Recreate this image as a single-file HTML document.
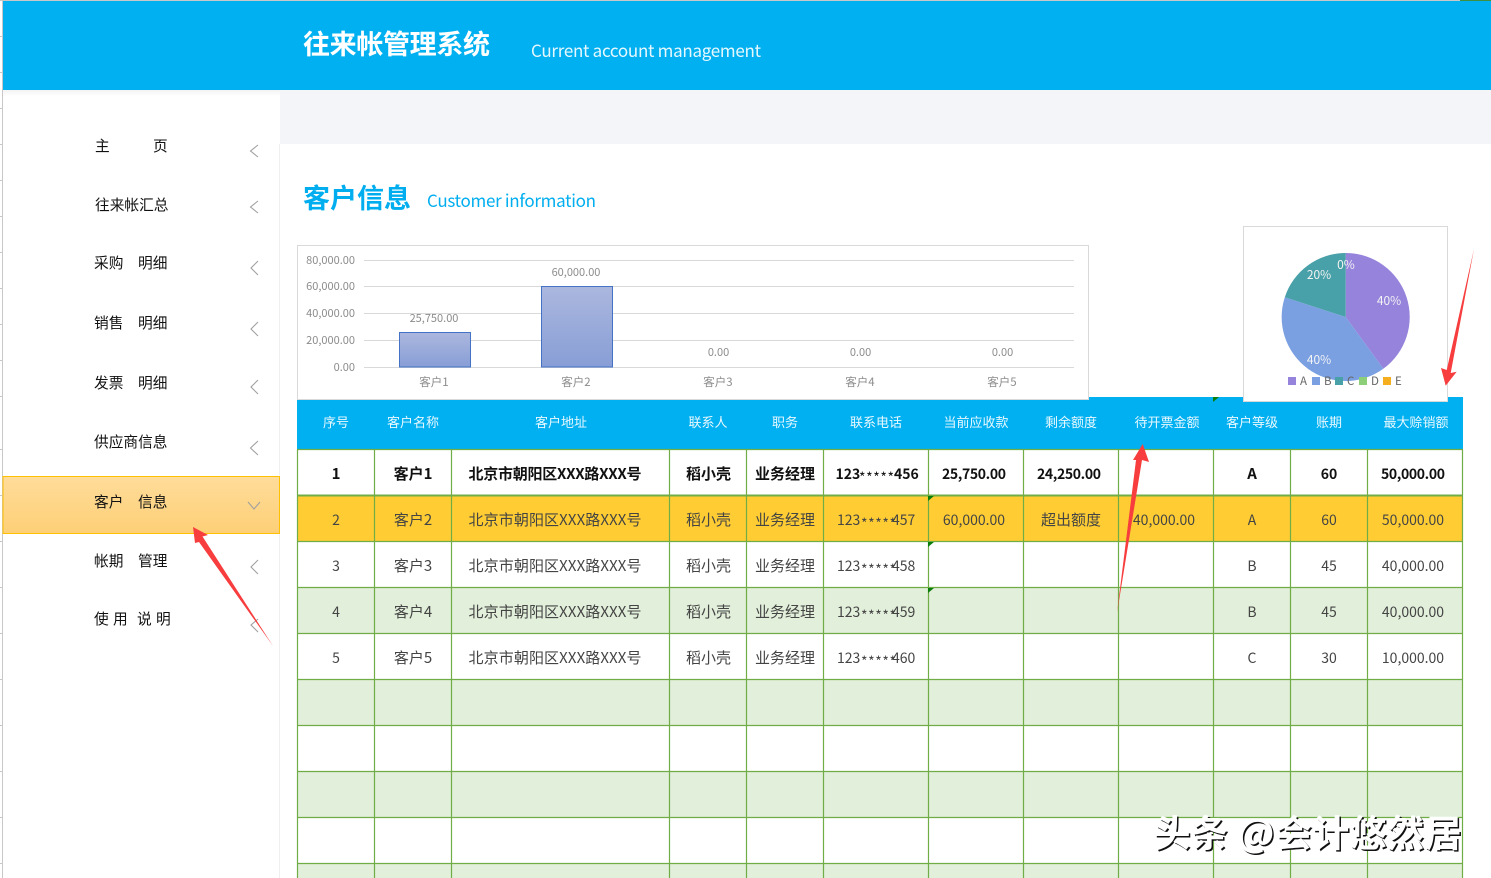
<!DOCTYPE html>
<html lang="zh-CN">
<head>
<meta charset="utf-8">
<title>往来帐管理系统</title>
<style>
html,body{margin:0;padding:0;background:#fff;width:1491px;height:878px;overflow:hidden}
svg{display:block;font-family:"Liberation Sans","Noto Sans CJK SC",sans-serif}
.cjk{font-family:"Noto Sans CJK SC","Liberation Sans",sans-serif}
.menu text{font-size:14.700px;fill:#111}
.ch{fill:none;stroke:#a0a0a0;stroke-width:1.1}
.ax text{font-size:11px;fill:#8c8c8c}
.ax .m{text-anchor:middle}
.ax .r{text-anchor:end}
.ax .c{font-size:11.500px}
.gl{stroke:#d9d9d9;stroke-width:1}
.th text{font-size:13px;fill:#e8f8ff;text-anchor:middle}
.b text{font-size:15px;fill:#111;font-weight:bold;text-anchor:middle}
.n text{font-size:15px;fill:#444;text-anchor:middle}
.b text.s,.n text.s{font-size:14px}
.b text.p,.n text.p{text-anchor:start;font-size:14px}
.p .st{font-size:14px;font-weight:normal;letter-spacing:.6px}
.grid path{stroke:#70ad47;stroke-width:1.2;fill:none}
.tri{fill:#0a7d0a}
.red{fill:#f73d3d}
.wm{font-size:37px;font-weight:bold}
</style>
</head>
<body>
<svg width="1491" height="878" viewBox="0 0 1491 878" xmlns="http://www.w3.org/2000/svg">
<defs>
<linearGradient id="bar" x1="0" y1="0" x2="0" y2="1"><stop offset="0" stop-color="#abb7de"/><stop offset="1" stop-color="#889ed6"/></linearGradient>
<linearGradient id="act" x1="0" y1="0" x2="0" y2="1"><stop offset="0" stop-color="#ffdc9a"/><stop offset="1" stop-color="#fdd077"/></linearGradient>
<linearGradient id="sh" x1="0" y1="0" x2="0" y2="1"><stop offset="0" stop-color="#e6e6e6"/><stop offset="1" stop-color="#ffffff"/></linearGradient>
</defs>

<!-- outer spreadsheet edge -->
<rect x="0" y="0" width="1491" height="1" fill="#c8c8c8"/>
<rect x="2" y="0" width="1" height="878" fill="#c8c8c8"/>
<path d="M0 36.500H2M0 72.500H2M0 108.500H2M0 144.500H2M0 180.500H2M0 216.500H2M0 252.500H2M0 288.500H2M0 324.500H2M0 360.500H2M0 396.500H2M0 449.500H2M0 495.500H2M0 541.500H2M0 587.500H2M0 633.500H2M0 679.500H2M0 725.500H2M0 771.500H2M0 817.500H2M0 863.500H2" stroke="#c8c8c8" stroke-width="1"/>

<!-- header -->
<rect x="3" y="1" width="1488" height="89" fill="#00b0f0"/>
<rect x="1460" y="0" width="31" height="1" fill="#3f8f3f"/>
<text x="303" y="54" class="cjk" font-size="27" font-weight="bold" fill="#fff" textLength="187">往来帐管理系统</text>
<text x="531" y="57" class="cjk" font-size="17" fill="#e6f8ff" textLength="230">Current account management</text>

<!-- sidebar and band -->
<rect x="280" y="90" width="1211" height="54" fill="#f3f5f9"/>
<rect x="3" y="90" width="277" height="6" fill="url(#sh)" opacity=".5"/>
<rect x="279" y="144" width="1" height="734" fill="#efefef"/>
<rect x="3" y="476.500" width="276.500" height="57" fill="url(#act)" stroke="#ffc000" stroke-width="1"/>

<g class="menu cjk">
<text x="95" y="151">主</text><text x="153" y="151">页</text>
<text x="95" y="210">往来帐汇总</text>
<text x="94" y="268">采购</text><text x="138" y="268">明细</text>
<text x="94" y="328">销售</text><text x="138" y="328">明细</text>
<text x="94" y="388">发票</text><text x="138" y="388">明细</text>
<text x="94" y="447">供应商信息</text>
<text x="94" y="507">客户</text><text x="138" y="507">信息</text>
<text x="94" y="566">帐期</text><text x="138" y="566">管理</text>
<text x="94" y="624">使</text><text x="113" y="624">用</text><text x="137" y="624">说</text><text x="156" y="624">明</text>
</g>
<g class="ch">
<path d="M258 145L250.500 151L258 157"/>
<path d="M258 201L250.500 207L258 213"/>
<path d="M258 261L251 268L258 275"/>
<path d="M258 322L251 329L258 336"/>
<path d="M258 380L251 387L258 394"/>
<path d="M258 441L250.500 448L258 455"/>
<path d="M248 502L254 509L260 502"/>
<path d="M258 560L251 567L258 574"/>
<path d="M258 619L251 625L258 632"/>
</g>

<!-- section title -->
<text x="303" y="208" class="cjk" font-size="27" font-weight="bold" fill="#00aeef" textLength="108">客户信息</text>
<text x="427" y="207" class="cjk" font-size="17" fill="#00aeef" textLength="169">Customer information</text>

<!-- table fills -->
<rect x="297" y="400" width="792" height="50" fill="#00b0f0"/>
<rect x="1089" y="397" width="374" height="53" fill="#00b0f0"/>
<rect x="297" y="495" width="1166" height="46" fill="#ffcd33"/>
<rect x="297" y="587" width="1166" height="46" fill="#e2efda"/>
<rect x="297" y="679" width="1166" height="46" fill="#e2efda"/>
<rect x="297" y="771" width="1166" height="46" fill="#e2efda"/>
<rect x="297" y="863" width="1166" height="15" fill="#e2efda"/>

<!-- grid -->
<g class="grid">
<path d="M297 449.500H1463M297 541.500H1463M297 587.500H1463M297 633.500H1463M297 679.500H1463M297 725.500H1463M297 771.500H1463M297 817.500H1463M297 863.500H1463"/>
<path d="M297 495.500H1463" style="stroke-width:2"/>
<path d="M297.500 450V878M374.500 450V878M451.500 450V878M669.500 450V878M746.500 450V878M823.500 450V878M928.500 450V878M1023.500 450V878M1118.500 450V878M1213.500 450V878M1290.500 450V878M1367.500 450V878M1462.500 450V878"/>
</g>

<!-- header labels -->
<g class="th cjk">
<text x="336" y="427">序号</text>
<text x="413" y="427">客户名称</text>
<text x="561" y="427">客户地址</text>
<text x="708" y="427">联系人</text>
<text x="785" y="427">职务</text>
<text x="876" y="427">联系电话</text>
<text x="976" y="427">当前应收款</text>
<text x="1071" y="427">剩余额度</text>
<text x="1167" y="427">待开票金额</text>
<text x="1252" y="427">客户等级</text>
<text x="1329" y="427">账期</text>
<text x="1416" y="427">最大赊销额</text>
</g>

<!-- row 1 -->
<g class="b cjk">
<text x="336" y="479">1</text>
<text x="413" y="479">客户1</text>
<text x="555" y="479" textLength="173">北京市朝阳区XXX路XXX号</text>
<text x="708.500" y="479">稻小壳</text>
<text x="785" y="479">业务经理</text>
<text class="p" y="479"><tspan x="835.500">123</tspan><tspan class="st" x="859" dy="3.500">*****</tspan><tspan x="894" dy="-3.500">456</tspan></text>
<text class="s" x="974" y="479" textLength="64">25,750.00</text>
<text class="s" x="1069" y="479" textLength="64">24,250.00</text>
<text x="1252" y="479">A</text>
<text class="s" x="1329" y="479">60</text>
<text class="s" x="1413" y="479" textLength="64">50,000.00</text>
</g>

<!-- rows 2-5 -->
<g class="n cjk">
<text class="s" x="336" y="525">2</text><text x="413" y="525">客户2</text><text x="555" y="525" textLength="173">北京市朝阳区XXX路XXX号</text><text x="708.500" y="525">稻小壳</text><text x="785" y="525">业务经理</text><text class="p" y="525"><tspan x="837">123</tspan><tspan class="st" x="861" dy="3.500">*****</tspan><tspan x="892" dy="-3.500">457</tspan></text><text class="s" x="974" y="525">60,000.00</text><text x="1071" y="525">超出额度</text><text class="s" x="1164" y="525">40,000.00</text><text class="s" x="1252" y="525">A</text><text class="s" x="1329" y="525">60</text><text class="s" x="1413" y="525">50,000.00</text>
<text class="s" x="336" y="571">3</text><text x="413" y="571">客户3</text><text x="555" y="571" textLength="173">北京市朝阳区XXX路XXX号</text><text x="708.500" y="571">稻小壳</text><text x="785" y="571">业务经理</text><text class="p" y="571"><tspan x="837">123</tspan><tspan class="st" x="861" dy="3.500">*****</tspan><tspan x="892" dy="-3.500">458</tspan></text><text class="s" x="1252" y="571">B</text><text class="s" x="1329" y="571">45</text><text class="s" x="1413" y="571">40,000.00</text>
<text class="s" x="336" y="617">4</text><text x="413" y="617">客户4</text><text x="555" y="617" textLength="173">北京市朝阳区XXX路XXX号</text><text x="708.500" y="617">稻小壳</text><text x="785" y="617">业务经理</text><text class="p" y="617"><tspan x="837">123</tspan><tspan class="st" x="861" dy="3.500">*****</tspan><tspan x="892" dy="-3.500">459</tspan></text><text class="s" x="1252" y="617">B</text><text class="s" x="1329" y="617">45</text><text class="s" x="1413" y="617">40,000.00</text>
<text class="s" x="336" y="663">5</text><text x="413" y="663">客户5</text><text x="555" y="663" textLength="173">北京市朝阳区XXX路XXX号</text><text x="708.500" y="663">稻小壳</text><text x="785" y="663">业务经理</text><text class="p" y="663"><tspan x="837">123</tspan><tspan class="st" x="861" dy="3.500">*****</tspan><tspan x="892" dy="-3.500">460</tspan></text><text class="s" x="1252" y="663">C</text><text class="s" x="1329" y="663">30</text><text class="s" x="1413" y="663">10,000.00</text>
</g>

<!-- error triangles -->
<path class="tri" d="M928 496H934L928 501Z"/>
<path class="tri" d="M928 542H934L928 547Z"/>
<path class="tri" d="M928 588H934L928 593Z"/>
<path class="tri" d="M1213 397H1219L1213 402Z"/>

<!-- bar chart -->
<rect x="297.500" y="245.500" width="791" height="154" fill="#fff" stroke="#d9d9d9"/>
<g class="gl"><path d="M364 260.500H1074M364 286.500H1074M364 313.500H1074M364 340.500H1074M364 367.500H1074"/></g>
<rect x="399.500" y="332.500" width="71" height="34.500" fill="url(#bar)" stroke="#4472c4"/>
<rect x="541.500" y="286.500" width="71" height="80.500" fill="url(#bar)" stroke="#4472c4"/>
<g class="ax cjk">
<text class="r" x="355" y="264">80,000.00</text>
<text class="r" x="355" y="290">60,000.00</text>
<text class="r" x="355" y="317">40,000.00</text>
<text class="r" x="355" y="344">20,000.00</text>
<text class="r" x="355" y="371">0.00</text>
<text class="m" x="434" y="322">25,750.00</text>
<text class="m" x="576" y="276">60,000.00</text>
<text class="m" x="718.500" y="356">0.00</text>
<text class="m" x="860.500" y="356">0.00</text>
<text class="m" x="1002.500" y="356">0.00</text>
<text class="m c" x="434" y="386">客户1</text>
<text class="m c" x="576" y="386">客户2</text>
<text class="m c" x="718" y="386">客户3</text>
<text class="m c" x="860" y="386">客户4</text>
<text class="m c" x="1002" y="386">客户5</text>
</g>

<!-- pie chart -->
<rect x="1243.500" y="226.500" width="204" height="175" fill="#fff" stroke="#d9d9d9"/>
<path d="M1345.700 317V253A64 64 0 0 1 1383.300 368.800Z" fill="#9683dc"/>
<path d="M1345.700 317L1383.300 368.800A64 64 0 0 1 1284.800 297.200Z" fill="#7aa0e2"/>
<path d="M1345.700 317L1284.800 297.200A64 64 0 0 1 1345.700 253Z" fill="#48a0a8"/>
<g class="cjk" font-size="12" fill="#f4f4f4" text-anchor="middle">
<text x="1389" y="305">40%</text>
<text x="1319" y="364">40%</text>
<text x="1319" y="279">20%</text>
<text x="1346" y="269">0%</text>
</g>
<rect x="1288" y="377" width="8" height="8" fill="#9683dc"/>
<rect x="1312" y="377" width="8" height="8" fill="#7aa0e2"/>
<rect x="1335" y="377" width="8" height="8" fill="#48a0a8"/>
<rect x="1359" y="377" width="8" height="8" fill="#8ccf78"/>
<rect x="1383" y="377" width="8" height="8" fill="#f5ae1e"/>
<g class="cjk" font-size="11.500" fill="#666">
<text x="1300" y="385">A</text><text x="1324" y="385">B</text><text x="1347" y="385">C</text><text x="1371" y="385">D</text><text x="1395" y="385">E</text>
</g>

<!-- red arrows -->
<polygon class="red" points="193,527 208,535 202.500,536.500 273,646 199,542 195,543"/>
<polygon class="red" points="1142.700,444 1149,462 1142,460 1117,613 1136,460 1133,460"/>
<polygon class="red" points="1474,249 1450.700,373 1456.700,371.700 1445.700,385.700 1441,368 1446.700,370"/>

<!-- watermark -->
<g class="cjk wm">
<text x="1155" y="848" fill="#111" textLength="308">头条 @会计悠然居</text>
<text x="1153.500" y="846.500" fill="#fff" textLength="308">头条 @会计悠然居</text>
</g>
</svg>
</body>
</html>
